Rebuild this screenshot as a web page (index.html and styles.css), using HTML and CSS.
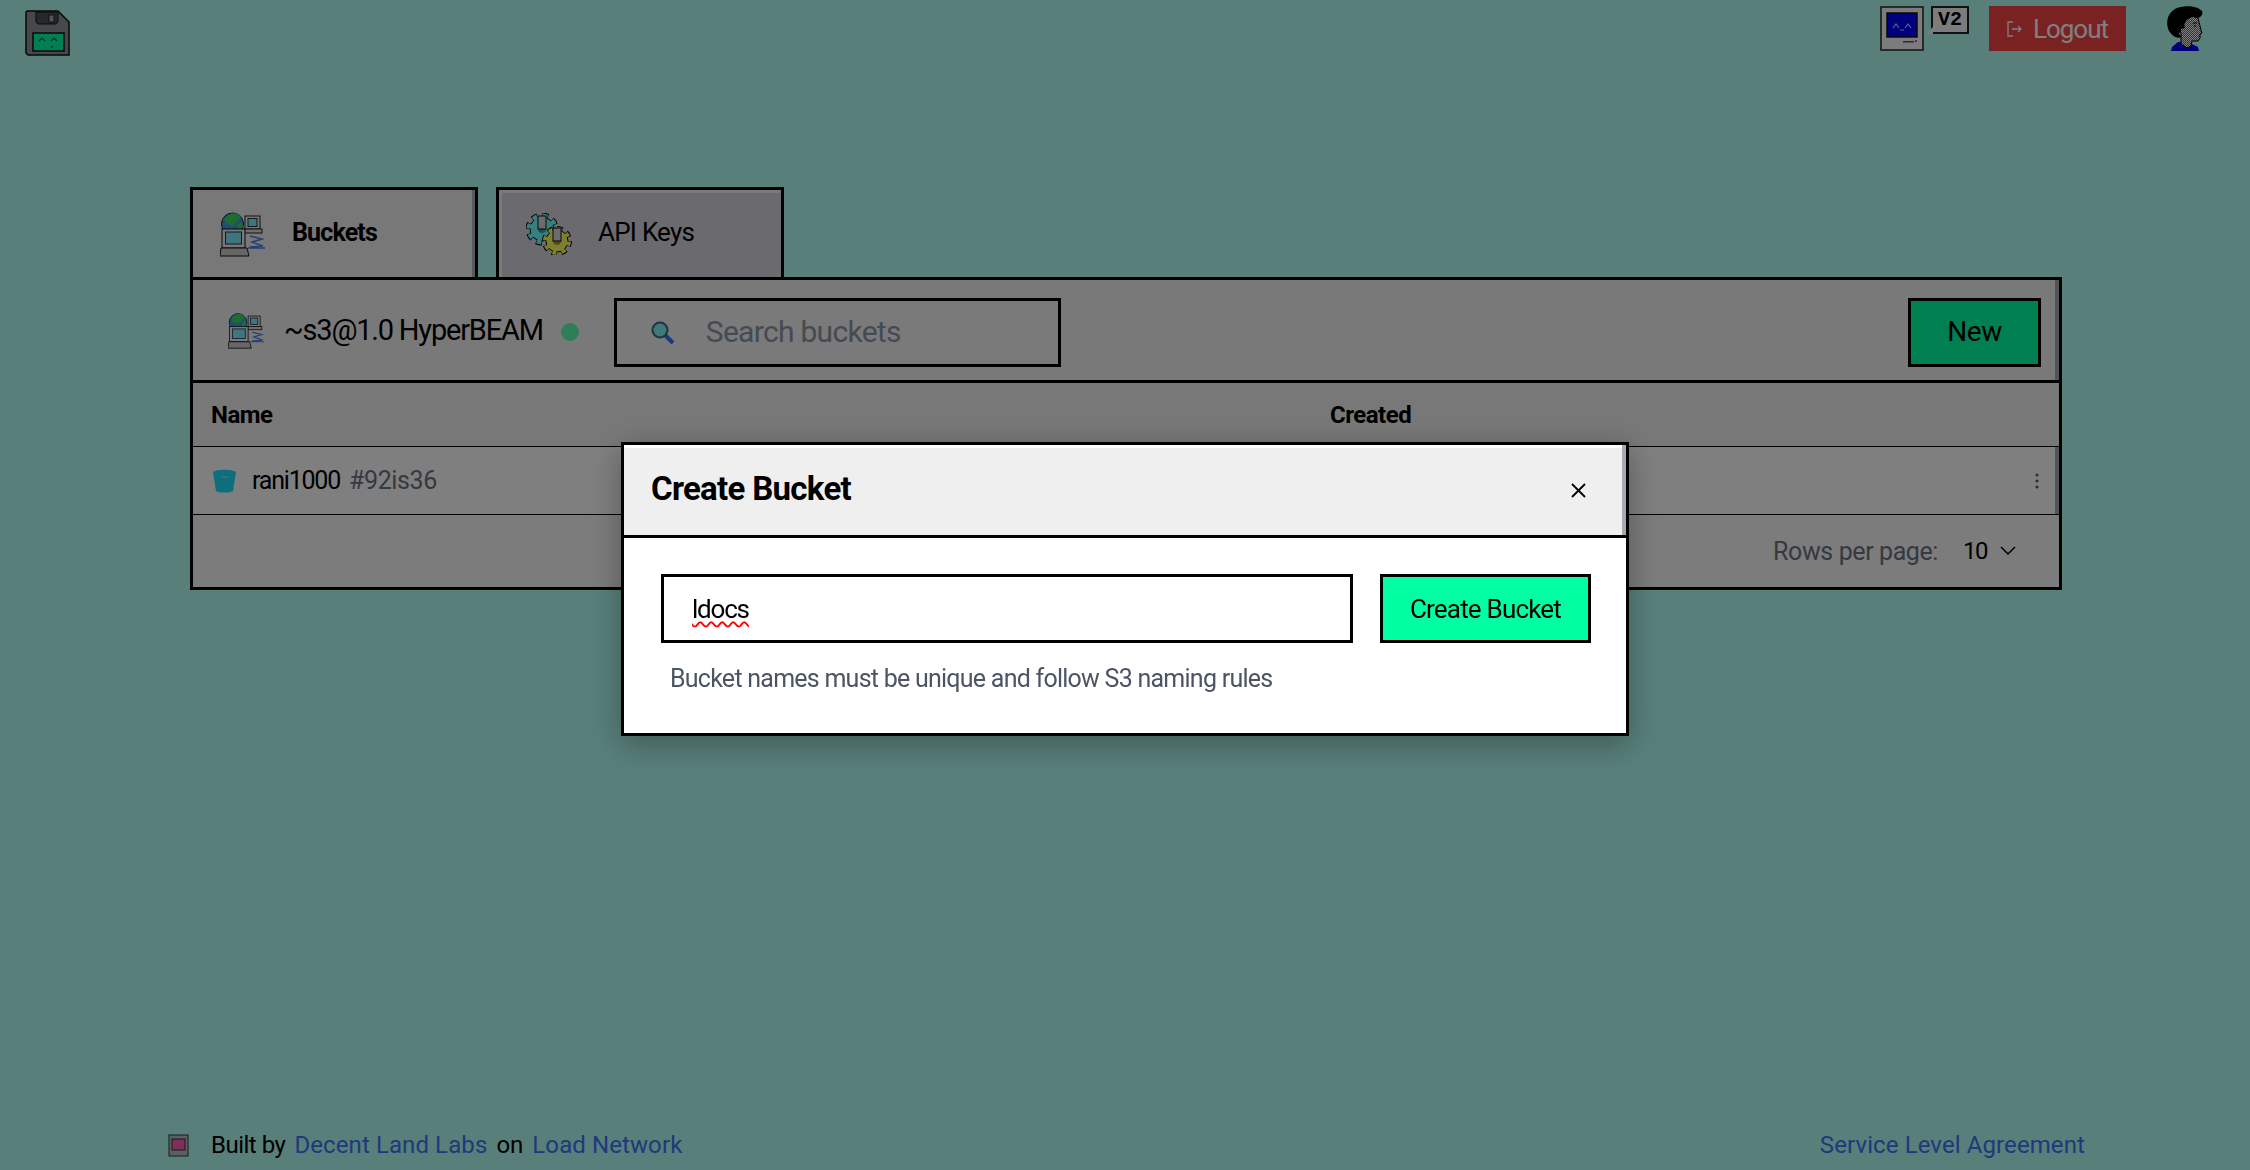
FILE: index.html
```html
<!DOCTYPE html>
<html lang="en">
<head>
<meta charset="utf-8">
<title>Buckets</title>
<link rel="stylesheet" href="styles.css">
</head>
<body>
<svg width="0" height="0" class="defs">
  <defs>
    <g id="netico">
      <circle cx="12.500" cy="13" r="11" fill="#3f9fe0" stroke="#123" stroke-width="1"/>
      <path d="M5 7c4-5 10-6 14-3 3 2 2 5-1 5-1 4-4 2-5 6-3 1-3-3-6-2-2-1-3-3-2-6z" fill="#3fd860"/>
      <path d="M17 14l5-3 1 5-4 3z" fill="#3fd860"/>
      <rect x="25" y="5" width="15" height="13" fill="#f0f0f0" stroke="#222"/>
      <rect x="28" y="7.500" width="9" height="8" fill="#80e8ff" stroke="#234"/>
      <rect x="24" y="18" width="18" height="4" fill="#ddd" stroke="#222"/>
      <rect x="2" y="18" width="23" height="19" fill="#f0f0f0" stroke="#111"/>
      <rect x="5.500" y="21" width="16" height="12" fill="#80e8ff" stroke="#234"/>
      <path d="M1 37h26l2 8H0z" fill="#ccc" stroke="#111"/>
      <path d="M30 25l12 3-10 3 11 4-13 1M28 37h17" fill="none" stroke="#4a80e0" stroke-width="1.500"/>
    </g>
  </defs>
</svg>

<header class="topbar">
  <svg class="floppy" width="46" height="46" viewBox="0 0 46 46" aria-hidden="true">
    <path d="M2 1h31l11 11v33H3l-2-2V2z" fill="#8c9096" stroke="#111" stroke-width="1.500"/>
    <path d="M11 2h22v10l-2 2H13l-2-2z" fill="#4c5056" stroke="#111"/>
    <rect x="24" y="5" width="5" height="7" fill="#a8acb0" stroke="#222"/>
    <rect x="8" y="23" width="31" height="18" fill="#00ffa8" stroke="#111" stroke-width="1.500"/>
    <path d="M14 31l3-3 3 3M26 31l3-3 3 3M26 38l2-2" fill="none" stroke="#064" stroke-width="1.200"/>
  </svg>
  <div class="topright">
    <svg class="mac" width="44" height="45" viewBox="0 0 44 45" aria-hidden="true">
      <rect x="1" y="1" width="42" height="43" fill="#f8f8f8" stroke="#222" stroke-width="1.500"/>
      <rect x="7" y="7" width="30" height="24" fill="#0000ff" stroke="#111" stroke-width="1.500"/>
      <path d="M13 22l3-4 3 4M25 22l3-4 3 4M20 24h4" fill="none" stroke="#b8c8ff" stroke-width="1.200"/>
      <rect x="23" y="35" width="11" height="1.500" fill="#555"/>
      <rect x="35" y="34" width="2" height="2" fill="#d040d0"/>
    </svg>
    <div class="bubble">V2</div>
    <a class="logout" href="#">
      <svg width="16" height="16" viewBox="0 0 16 16" aria-hidden="true"><path d="M6 1H1v14h5M5 8h9M11 5l3 3-3 3" fill="none" stroke="#fff" stroke-width="1.300"/></svg>
      <span>Logout</span>
    </a>
    <svg class="avatar" width="37" height="47" viewBox="0 0 37 47" aria-hidden="true">
      <defs><pattern id="dith" width="2" height="2" patternUnits="userSpaceOnUse"><rect width="2" height="2" fill="#fff"/><rect width="1" height="1" fill="#666"/><rect x="1" y="1" width="1" height="1" fill="#666"/></pattern></defs>
      <path d="M6 42l6-5h10l10 5 1 4H5z" fill="#0000ff"/>
      <path d="M13 18l10-8 9 3 3 12 1 3-2 1 0 4-2 3-6 0-1 5-4 2-6-4 0-10z" fill="url(#dith)" stroke="#000"/>
      <path d="M3 26C-1 17 2 8 9 4c7-4 22-4 27 2 1 3 0 6-4 7-5-2-8-1-12 3-2 3-2 4-1 7l-4 1-2 5 3 3c-5 2-9 0-13-6z" fill="#000"/>
      <path d="M27 18h4M28 21h2" stroke="#000" fill="none"/>
    </svg>
  </div>
</header>

<main class="content">
  <nav class="tabs">
    <a class="tab tab-active" href="#">
      <svg width="46" height="46" viewBox="0 0 46 46" aria-hidden="true"><use href="#netico"/></svg>
      <span>Buckets</span>
    </a>
    <a class="tab tab-idle" href="#">
      <svg width="46" height="42" viewBox="0 0 46 42" aria-hidden="true">
        <circle cx="16" cy="16" r="13" fill="none" stroke="#000" stroke-width="7" stroke-dasharray="5.500 4.700"/>
        <circle cx="16" cy="16" r="12" fill="#70ffff" stroke="#000"/>
        <circle cx="16" cy="16" r="13" fill="none" stroke="#70ffff" stroke-width="5" stroke-dasharray="4.500 5.700" stroke-dashoffset="-0.500"/>
        <circle cx="16" cy="16" r="4" fill="#38a0a0"/>
        <rect x="12" y="3" width="8" height="13" fill="#d8d8d8" stroke="#111"/>
        <circle cx="31" cy="28" r="12" fill="none" stroke="#000" stroke-width="6" stroke-dasharray="5 4.420"/>
        <circle cx="31" cy="28" r="11" fill="#ffff60" stroke="#000"/>
        <circle cx="31" cy="28" r="12" fill="none" stroke="#ffff60" stroke-width="4" stroke-dasharray="4 5.420" stroke-dashoffset="-0.500"/>
        <circle cx="31" cy="28" r="4" fill="#a0a030"/>
        <rect x="27" y="15" width="8" height="13" fill="#d8d8d8" stroke="#111"/>
      </svg>
      <span>API Keys</span>
    </a>
  </nav>

  <section class="panel">
    <div class="toolbar">
      <svg class="tool-ico" width="37" height="37" viewBox="0 0 46 46" aria-hidden="true"><use href="#netico"/></svg>
      <span class="node">~s3@1.0 HyperBEAM</span>
      <span class="dot"></span>
      <div class="search">
        <svg width="25" height="25" viewBox="0 0 25 25" aria-hidden="true">
          <path d="M15 15l8 8" stroke="#3070ff" stroke-width="4"/>
          <circle cx="10" cy="10" r="7.500" fill="#80f0f8" stroke="#406878" stroke-width="2"/>
        </svg>
        <span class="placeholder">Search buckets</span>
      </div>
      <a class="new" href="#"><span class="new-label">New</span></a>
    </div>

    <div class="table-head">
      <span>Name</span>
      <span>Created</span>
    </div>

    <div class="row">
      <svg width="25" height="24" viewBox="0 0 25 24" aria-hidden="true">
        <path d="M1 3c3-3 20-3 23 0l-3 19c-3 2-14 2-17 0z" fill="#1ddcf8"/>
        <path d="M10 9l1.500-2 1.500 2 1.500-2 1.500 2" fill="none" stroke="#90eeff"/>
      </svg>
      <span class="bucket-name">rani1000</span>
      <span class="bucket-id">#92is36</span>
      <svg class="kebab" width="4" height="16" viewBox="0 0 4 16" aria-hidden="true"><circle cx="2" cy="2" r="1.500"/><circle cx="2" cy="8" r="1.500"/><circle cx="2" cy="14" r="1.500"/></svg>
    </div>

    <div class="pager">
      <span class="rows-label">Rows per page:</span>
      <span class="rows-value">10</span>
      <svg width="16" height="10" viewBox="0 0 16 10" aria-hidden="true"><path d="M1 1l7 7 7-7" fill="none" stroke="#000" stroke-width="1.500"/></svg>
    </div>
  </section>
</main>

<footer class="foot">
  <div class="foot-left">
    <svg width="21" height="23" viewBox="0 0 21 23" aria-hidden="true">
      <rect x="1" y="1" width="19" height="21" fill="#b8c0c8" stroke="#333"/>
      <rect x="4" y="5" width="13" height="11" fill="#ff60b0" stroke="#333"/>
    </svg>
    <span class="built">Built by</span>
    <a href="#">Decent Land Labs</a>
    <span>on</span>
    <a href="#">Load Network</a>
  </div>
  <a href="#">Service Level Agreement</a>
</footer>

<div class="backdrop">
  <div class="modal">
    <div class="modal-head">
      <h2>Create Bucket</h2>
      <svg width="15" height="15" viewBox="0 0 15 15" aria-hidden="true"><path d="M1 1l13 13M14 1L1 14" stroke="#000" stroke-width="1.800"/></svg>
    </div>
    <div class="modal-body">
      <div class="form-row">
        <div class="field"><span class="typed">ldocs</span></div>
        <a class="create" href="#">Create Bucket</a>
      </div>
      <p class="hint">Bucket names must be unique and follow S3 naming rules</p>
    </div>
  </div>
</div>
</body>
</html>
```

FILE: styles.css
```css
* { box-sizing: border-box; }
html, body { margin: 0; height: 100%; }
body {
  height: 1170px;
  overflow: hidden;
  display: flex;
  flex-direction: column;
  background: #b0fef4;
  color: #000;
  font-family: "Roboto", "Liberation Sans", sans-serif;
  font-size: 26px;
}
a { color: inherit; text-decoration: none; }
.defs { position: absolute; }

.topbar {
  height: 187px;
  flex: none;
  display: flex;
  justify-content: space-between;
  align-items: flex-start;
  padding: 10px 47px 0 25px;
}
.topright { display: flex; align-items: flex-start; margin-top: -5px; }
.mac { margin: 1px 0 0 1px; }
.bubble {
  position: relative;
  width: 38px;
  height: 28px;
  margin: 1px 0 0 7px;
  border: 2px solid #222;
  background: #f8f8f8;
  font: bold 20px/24px "Liberation Mono", monospace;
  text-align: center;
}
.bubble::after {
  content: "";
  position: absolute;
  left: -7px;
  bottom: -2px;
  border-style: solid;
  border-width: 0 0 7px 7px;
  border-color: transparent transparent #f8f8f8 transparent;
}
.logout {
  width: 137px;
  height: 45px;
  margin: 1px 40px 0 20px;
  display: flex;
  align-items: center;
  justify-content: center;
  gap: 10px;
  background: #f44444;
  color: #fff;
  font-size: 26px;
  letter-spacing: -1px;
}

.content { flex: none; width: 1872px; margin-left: 190px; }
.tabs { display: flex; gap: 18px; height: 90px; }
.tab {
  width: 288px;
  display: flex;
  align-items: center;
  gap: 26px;
  padding: 0 0 0 27px;
  border: 3px solid #000;
  border-bottom: 0;
}
.tab span { margin-bottom: 3px; }
.tab-active {
  background: #f0f0f0;
  box-shadow: inset -3px 0 0 #b4b4bc;
  font-size: 25px;
  font-weight: 700;
  letter-spacing: -.85px;
}
.tab-idle {
  background: #d6d6de;
  box-shadow: inset 3px 3px 0 #f4f4f4;
  font-size: 26px;
  letter-spacing: -.75px;
}

.panel { border: 3px solid #000; height: 313px; background: #f4f4f4; }
.toolbar {
  height: 103px;
  display: flex;
  align-items: center;
  padding: 5px 18px 0 35px;
  border-bottom: 3px solid #000;
  box-shadow: inset -4px 0 0 #a8a8b0;
  background: #f2f2f2;
}
.tool-ico { margin-bottom: 4px; }
.node { margin: 0 0 5px 19px; font-size: 29px; letter-spacing: -1.2px; }
.dot { width: 18px; height: 18px; margin: 0 0 2px 18px; border-radius: 50%; background: #5cffae; }
.search {
  width: 447px;
  height: 69px;
  margin-left: 35px;
  display: flex;
  align-items: center;
  gap: 31px;
  padding-left: 33px;
  border: 3px solid #000;
  background: #f4f4f4;
}
.placeholder { margin-bottom: 3px; font-size: 30px; letter-spacing: -.7px; color: #8a94a6; }
.new {
  width: 133px;
  height: 69px;
  margin-left: auto;
  display: flex;
  align-items: center;
  justify-content: center;
  border: 3px solid #000;
  background: #00ffa0;
  font-size: 28px;
  letter-spacing: -.5px;
}
.new-label { margin-bottom: 3px; }
.table-head {
  height: 64px;
  display: grid;
  grid-template-columns: 1119px 1fr;
  align-items: center;
  padding-left: 18px;
  border-bottom: 1px solid #000;
  background: #f0f0f0;
  font-size: 24px;
  font-weight: 700;
  letter-spacing: -.5px;
}
.row {
  height: 68px;
  display: flex;
  align-items: center;
  padding: 0 20px 0 19px;
  border-bottom: 1px solid #000;
  background: #fff;
  box-shadow: inset -4px 0 0 #a8a8b0;
  font-size: 25px;
}
.bucket-name { margin-left: 15px; letter-spacing: -1.2px; }
.bucket-id { margin-left: 9px; letter-spacing: -.4px; color: #6b7280; }
.kebab { margin-left: auto; fill: #4b5563; }
.pager {
  height: 72px;
  display: flex;
  align-items: center;
  justify-content: flex-end;
  padding-right: 43px;
  background: #f8f8f8;
  font-size: 25px;
}
.rows-label { letter-spacing: -.4px; color: #6b7280; }
.rows-value { margin: 0 13px 0 25px; font-size: 24px; letter-spacing: -1.500px; }

.foot {
  margin-top: auto;
  height: 50px;
  flex: none;
  display: flex;
  justify-content: space-between;
  align-items: center;
  padding: 0 165px 0 168px;
  font-size: 24px;
}
.foot a { color: #3c74f6; letter-spacing: .1px; }
.foot-left { display: flex; align-items: center; gap: 9px; }
.built { margin-left: 13px; letter-spacing: -.5px; }

.backdrop {
  position: fixed;
  inset: 0;
  display: flex;
  justify-content: center;
  align-items: flex-start;
  padding-top: 442px;
  background: rgba(0, 0, 0, .5);
}
.modal {
  width: 1008px;
  height: 294px;
  border: 3px solid #000;
  background: #fff;
  box-shadow: 0 8px 30px rgba(0, 0, 0, .3);
}
.modal-head {
  height: 93px;
  display: flex;
  align-items: center;
  justify-content: space-between;
  padding: 0 40px 0 27px;
  border-bottom: 3px solid #000;
  background: #efefef;
  box-shadow: inset -4px 0 0 #a8a8b0, inset 0 3px 0 #fff;
}
.modal-head h2 { margin: 0 0 3px; font-size: 33px; font-weight: 700; letter-spacing: -.7px; }
.modal-body { padding: 36px 35px 0 37px; }
.form-row { display: flex; gap: 27px; }
.field {
  width: 692px;
  height: 69px;
  display: flex;
  align-items: center;
  padding-left: 28px;
  border: 3px solid #000;
  font-size: 26px;
  letter-spacing: -1.200px;
}
.typed { text-decoration: underline wavy #f00 1.500px; text-underline-offset: 3px; }
.create {
  width: 211px;
  height: 69px;
  display: flex;
  align-items: center;
  justify-content: center;
  border: 3px solid #000;
  background: #00ffa0;
  font-size: 26px;
  letter-spacing: -.8px;
}
.hint { margin: 20px 0 0 9px; font-size: 25px; line-height: 32px; letter-spacing: -.75px; color: #4b5563; }
```
